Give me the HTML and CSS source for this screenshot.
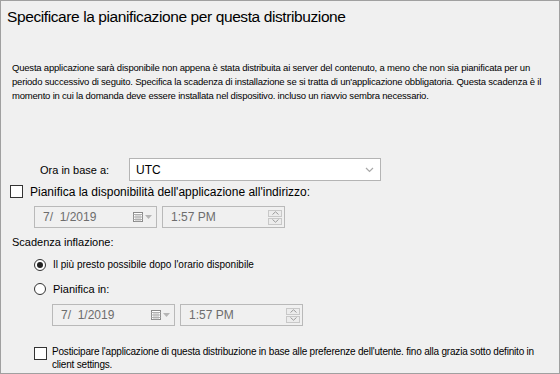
FILE: index.html
```html
<!DOCTYPE html>
<html lang="it">
<head>
    <meta charset="UTF-8">
    <meta name="viewport" content="width=device-width, initial-scale=1.0">
    <title>Pianificazione</title>
    <link rel="stylesheet" href="styles.css">
</head>
<body>

    <div class="dialog">
        <h1 class="title">Specificare la pianificazione per questa distribuzione</h1>

        <p class="intro">
            Questa applicazione sarà disponibile non appena è stata distribuita ai server del contenuto, a meno che non sia pianificata per un<br>
            periodo successivo di seguito. Specifica la scadenza di installazione se si tratta di un'applicazione obbligatoria. Questa scadenza è il<br>
            momento in cui la domanda deve essere installata nel dispositivo. incluso un riavvio sembra necessario.
        </p>

        <!-- Time zone -->
        <div class="tz-row">
            <span class="tz-label">Ora in base a:</span>
            <div class="select">
                <span>UTC</span>
                <svg class="chevron" width="9" height="6" viewBox="0 0 9 6"><path d="M1 1l3.5 3.5L8 1" fill="none" stroke="#a8a8a8" stroke-width="1.2"/></svg>
            </div>
        </div>

        <label class="check first">
            <span class="box"></span>
            <span>Pianifica la disponibilità dell'applicazione all'indirizzo:</span>
        </label>

        <div class="pickers first">
            <div class="field date">
                <span>7/&nbsp; 1/2019</span>
                <span class="cal">
                    <svg width="10" height="10" viewBox="0 0 10 10"><rect x="0.5" y="0.5" width="9" height="9" fill="#fff" stroke="#8a8a8a"/><path d="M0.5 2.5h9M3 2.5v7M5 2.5v7M7 2.5v7M0.5 5h9M0.5 7.5h9" stroke="#b0b0b0" stroke-width="1"/></svg>
                    <svg width="7" height="4" viewBox="0 0 7 4"><path d="M0 0h7L3.5 4z" fill="#b5b5b5"/></svg>
                </span>
            </div>
            <div class="field time">
                <span>1:57 PM</span>
                <span class="spin">
                    <span class="spin-btn"><svg width="7" height="4" viewBox="0 0 7 4"><path d="M0.5 3.5L3.5 0.8l3 2.7" fill="none" stroke="#9a9a9a"/></svg></span>
                    <span class="spin-btn"><svg width="7" height="4" viewBox="0 0 7 4"><path d="M0.5 0.5l3 2.7 3-2.7" fill="none" stroke="#9a9a9a"/></svg></span>
                </span>
            </div>
        </div>

        <div class="section-label">Scadenza inflazione:</div>

        <label class="radio checked">
            <span class="dot"></span>
            <span>Il più presto possibile dopo l'orario disponibile</span>
        </label>
        <label class="radio second">
            <span class="dot"></span>
            <span>Pianifica in:</span>
        </label>

        <div class="pickers second">
            <div class="field date">
                <span>7/&nbsp; 1/2019</span>
                <span class="cal">
                    <svg width="10" height="10" viewBox="0 0 10 10"><rect x="0.5" y="0.5" width="9" height="9" fill="#fff" stroke="#8a8a8a"/><path d="M0.5 2.5h9M3 2.5v7M5 2.5v7M7 2.5v7M0.5 5h9M0.5 7.5h9" stroke="#b0b0b0" stroke-width="1"/></svg>
                    <svg width="7" height="4" viewBox="0 0 7 4"><path d="M0 0h7L3.5 4z" fill="#b5b5b5"/></svg>
                </span>
            </div>
            <div class="field time">
                <span>1:57 PM</span>
                <span class="spin">
                    <span class="spin-btn"><svg width="7" height="4" viewBox="0 0 7 4"><path d="M0.5 3.5L3.5 0.8l3 2.7" fill="none" stroke="#9a9a9a"/></svg></span>
                    <span class="spin-btn"><svg width="7" height="4" viewBox="0 0 7 4"><path d="M0.5 0.5l3 2.7 3-2.7" fill="none" stroke="#9a9a9a"/></svg></span>
                </span>
            </div>
        </div>

        <label class="check last">
            <span class="box"></span>
            <span>Posticipare l'applicazione di questa distribuzione in base alle preferenze dell'utente. fino alla grazia sotto definito in<br>client settings.</span>
        </label>
    </div>

</body>
</html>
```

FILE: styles.css
```css
body {
    margin: 0;
    padding: 0;
    font-family: 'Liberation Sans', Arial, sans-serif;
    color: #000;
    background-color: #f0f0f0;
}

.dialog {
    width: 560px;
    height: 374px;
    box-sizing: border-box;
    border: 1px solid #a0a0a0;
    padding-left: 11px;
    display: flex;
    flex-direction: column;
    align-items: flex-start;
    background-color: #f0f0f0;
    overflow: hidden;
}

.title {
    margin: 6px 0 0 -5px;
    font-size: 15.5px;
    font-weight: normal;
    line-height: 20px;
    letter-spacing: -0.4px;
    white-space: nowrap;
}

.intro {
    margin: 34px 0 0 0;
    font-size: 9.5px;
    line-height: 14px;
    letter-spacing: -0.2px;
    white-space: nowrap;
}

.tz-row {
    margin-top: 55px;
    display: flex;
    align-items: center;
}

.tz-label {
    width: 89px;
    margin-left: 28px;
    font-size: 11px;
}

.select {
    width: 252px;
    height: 23px;
    box-sizing: border-box;
    border: 1px solid #b4b4b4;
    background-color: #fff;
    display: flex;
    align-items: center;
    justify-content: space-between;
    padding: 0 6px 0 6px;
    font-size: 12px;
}

.check {
    display: flex;
    align-items: flex-start;
    gap: 7px;
    font-size: 12px;
    line-height: 14px;
    white-space: nowrap;
}

.check.first {
    margin: 4px 0 0 -2px;
}

.check.last {
    margin: 19px 0 0 22px;
    gap: 5px;
    font-size: 10px;
    line-height: 13px;
    letter-spacing: -0.2px;
}

.box {
    width: 13px;
    height: 13px;
    box-sizing: border-box;
    border: 1px solid #333;
    background-color: #fff;
    flex-shrink: 0;
}

.check.last .box {
    margin-top: 2px;
}

.pickers {
    display: flex;
    gap: 5px;
}

.pickers.first {
    margin: 7px 0 0 22px;
}

.pickers.second {
    margin: 8px 0 0 40px;
}

.field {
    width: 123px;
    height: 22px;
    box-sizing: border-box;
    border: 1px solid #b9b9b9;
    background-color: #f0f0f0;
    display: flex;
    align-items: center;
    justify-content: space-between;
    padding: 0 4px 0 8px;
    font-size: 12px;
    color: #6d6d6d;
}

.cal {
    display: flex;
    align-items: center;
    gap: 2px;
}

.field.time {
    padding-right: 2px;
}

.spin {
    display: flex;
    flex-direction: column;
    gap: 1px;
}

.spin-btn {
    width: 14px;
    height: 7px;
    box-sizing: border-box;
    border: 1px solid #c8c8c8;
    background-color: #ececec;
    display: flex;
    align-items: center;
    justify-content: center;
}

.section-label {
    margin-top: 7px;
    font-size: 11px;
    line-height: 14px;
}

.radio {
    display: flex;
    align-items: center;
    gap: 7px;
    margin: 9px 0 0 22px;
    font-size: 10px;
    line-height: 14px;
}

.radio.second {
    margin-top: 10px;
    font-size: 11px;
}

.dot {
    width: 12px;
    height: 12px;
    box-sizing: border-box;
    border: 1px solid #333;
    border-radius: 50%;
    background-color: #fff;
    display: flex;
    align-items: center;
    justify-content: center;
}

.radio.checked .dot::after {
    content: '';
    width: 6px;
    height: 6px;
    border-radius: 50%;
    background-color: #222;
}
```
